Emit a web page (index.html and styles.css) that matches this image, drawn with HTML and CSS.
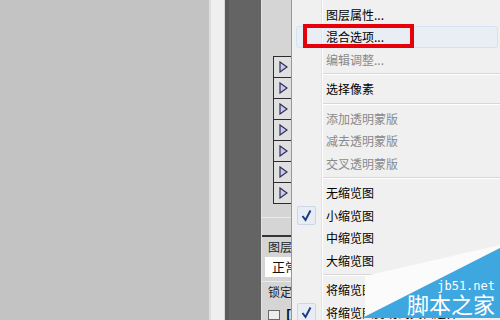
FILE: index.html
```html
<!DOCTYPE html>
<html lang="zh-CN">
<head>
    <meta charset="UTF-8">
    <title>图层菜单</title>
    <link rel="stylesheet" href="styles.css">
</head>
<body>

<div class="app">
    <div class="canvas"></div>
    <div class="ruler"></div>
    <div class="dock"></div>

    <div class="layers">
        <div class="layers-top"></div>
        <div class="expand-list">
            <div class="expand"><svg width="9" height="12" viewBox="0 0 9 12"><polygon points="1,1 8,6 1,11" /></svg></div>
            <div class="expand"><svg width="9" height="12" viewBox="0 0 9 12"><polygon points="1,1 8,6 1,11" /></svg></div>
            <div class="expand"><svg width="9" height="12" viewBox="0 0 9 12"><polygon points="1,1 8,6 1,11" /></svg></div>
            <div class="expand"><svg width="9" height="12" viewBox="0 0 9 12"><polygon points="1,1 8,6 1,11" /></svg></div>
            <div class="expand"><svg width="9" height="12" viewBox="0 0 9 12"><polygon points="1,1 8,6 1,11" /></svg></div>
            <div class="expand"><svg width="9" height="12" viewBox="0 0 9 12"><polygon points="1,1 8,6 1,11" /></svg></div>
            <div class="expand"><svg width="9" height="12" viewBox="0 0 9 12"><polygon points="1,1 8,6 1,11" /></svg></div>
        </div>
        <div class="layers-gap"></div>
        <div class="tab-strip"></div>
        <div class="panel-tab">图层</div>
        <div class="blend-mode">正常</div>
        <div class="lock-row">锁定</div>
        <div class="lock-icons"><span class="lock-box"></span><span class="bracket">[</span></div>
    </div>

    <div class="context-menu">
        <div class="item"><span class="mark"></span><span>图层属性...</span></div>
        <div class="item hover"><span class="mark"></span><span>混合选项...</span></div>
        <div class="item disabled"><span class="mark"></span><span>编辑调整...</span></div>
        <div class="sep"></div>
        <div class="item"><span class="mark"></span><span>选择像素</span></div>
        <div class="sep"></div>
        <div class="item disabled"><span class="mark"></span><span>添加透明蒙版</span></div>
        <div class="item disabled"><span class="mark"></span><span>减去透明蒙版</span></div>
        <div class="item disabled"><span class="mark"></span><span>交叉透明蒙版</span></div>
        <div class="sep"></div>
        <div class="item"><span class="mark"></span><span>无缩览图</span></div>
        <div class="item"><span class="mark checked"><svg width="11" height="13" viewBox="0 0 11 13"><path d="M1.5 7 L4.5 11 L9.5 1.5" /></svg></span><span>小缩览图</span></div>
        <div class="item"><span class="mark"></span><span>中缩览图</span></div>
        <div class="item"><span class="mark"></span><span>大缩览图</span></div>
        <div class="sep"></div>
        <div class="item"><span class="mark"></span><span>将缩览图剪切到图层边界</span></div>
        <div class="item"><span class="mark checked"><svg width="11" height="13" viewBox="0 0 11 13"><path d="M1.5 7 L4.5 11 L9.5 1.5" /></svg></span><span>将缩览图剪切到文档边界</span></div>
    </div>

    <div class="callout"></div>

    <div class="watermark">
        <svg width="140" height="76" viewBox="0 0 140 76">
            <polygon class="wm-light" points="5,32 140,1 140,4 5,74" />
            <polygon class="wm-blue" points="2,74 140,4 140,74" />
        </svg>
        <div class="wm-text">
            <div class="wm-url">jb51.net</div>
            <div class="wm-name">脚本之家</div>
        </div>
    </div>
</div>

</body>
</html>
```

FILE: styles.css
```css
/* page */
body {
    margin: 0;
    font-family: "Noto Sans CJK SC", "Liberation Sans", sans-serif;
    font-size: 12px;
    color: #000;
}

.app {
    position: relative;
    display: flex;
    width: 500px;
    height: 320px;
    overflow: hidden;
    background: #c3c3c3;
}

.canvas {
    width: 209px;
    background-color: #c3c3c3;
}

.ruler {
    width: 16px;
    box-sizing: border-box;
    background-color: #efefef;
    border-left: 2px solid #dedede;
    border-right: 1px solid #d6d6d6;
}

.dock {
    width: 36px;
    box-sizing: border-box;
    background-color: #646464;
    border-left: 4px solid #5a5a5a;
}

/* layers panel, mostly hidden under the menu */
.layers {
    flex: 1;
    display: flex;
    flex-direction: column;
    background-color: #d5d5d5;
    border-left: 1px solid #e2e2e2;
}

.layers-top {
    height: 57px;
}

.expand-list {
    margin-left: 11px;
}

.expand {
    display: flex;
    align-items: center;
    height: 20px;
    padding-left: 5px;
    background-color: #e0e0e0;
    border: 1px solid #2c2c2c;
    border-bottom: none;
}

.expand:last-child {
    border-bottom: 1px solid #2c2c2c;
}

.expand polygon {
    fill: #c9c9ea;
    stroke: #2d2d5a;
    stroke-width: 1.2;
}

.layers-gap {
    height: 13px;
    border-bottom: 1px solid #ececec;
}

.tab-strip {
    height: 17px;
    border-bottom: 2px solid #343434;
}

.panel-tab {
    height: 20px;
    line-height: 20px;
    padding-left: 6px;
    color: #222;
}

.blend-mode {
    height: 20px;
    line-height: 20px;
    margin-left: 3px;
    padding-left: 7px;
    background-color: #fff;
    color: #111;
    font-size: 13px;
}

.lock-row {
    height: 20px;
    line-height: 20px;
    margin-top: 4px;
    padding-left: 6px;
    border-top: 1px solid #ebebeb;
    color: #222;
}

.lock-icons {
    display: flex;
    align-items: flex-start;
    gap: 5px;
    padding: 8px 0 0 6px;
}

.lock-box {
    width: 10px;
    height: 8px;
    border: 1px solid #6a6a6a;
    background-color: #eee;
}

.bracket {
    font-family: "Liberation Mono", monospace;
    font-size: 12px;
    line-height: 10px;
    font-weight: bold;
}

/* context menu */
.context-menu {
    position: absolute;
    left: 291px;
    top: 0;
    width: 209px;
    height: 330px;
    padding-top: 3px;
    border-left: 1px solid #979797;
    background:
        linear-gradient(to right, transparent 29px, #e2e3e3 29px, #e2e3e3 30px, #fff 30px, #fff 31px, transparent 31px),
        #f0f0f0;
}

.item {
    position: relative;
    display: grid;
    grid-template-columns: 30px 1fr;
    column-gap: 4px;
    align-items: center;
    height: 22.5px;
    white-space: nowrap;
}

.item.disabled {
    color: #8a8a8a;
}

.item.hover::before {
    content: '';
    position: absolute;
    left: 4px;
    right: 3px;
    top: 0;
    bottom: 0;
    border: 1px solid #d3e3f4;
    border-radius: 3px;
    background-color: rgba(225, 236, 248, 0.45);
}

.item span {
    position: relative;
}

.mark {
    display: flex;
    justify-content: center;
}

.mark.checked {
    width: 19px;
    height: 19px;
    margin-left: 5px;
    align-items: center;
    box-sizing: border-box;
    border: 1px solid #cbd6e6;
    border-radius: 2px;
    background-color: #e8edf5;
}

.mark.checked path {
    fill: none;
    stroke: #1d3a85;
    stroke-width: 2;
}

.sep {
    display: flex;
    align-items: center;
    height: 7px;
    margin-left: 31px;
}

.sep::after {
    content: '';
    flex: 1;
    border-top: 1px solid #d7d7d7;
    border-bottom: 1px solid #fff;
}

/* red annotation box */
.callout {
    position: absolute;
    left: 303px;
    top: 24px;
    width: 111px;
    height: 24px;
    box-sizing: border-box;
    border: 4px solid #e5000a;
}

/* watermark */
.watermark {
    position: absolute;
    left: 360px;
    top: 244px;
    width: 140px;
    height: 76px;
}

.watermark svg {
    position: absolute;
    left: 0;
    top: 0;
}

.wm-light {
    fill: #fbfbfb;
}

.wm-blue {
    fill: #3fa7df;
}

.wm-text {
    position: absolute;
    right: 5px;
    top: 37px;
    text-align: right;
    color: #fff;
}

.wm-url {
    font-family: "DejaVu Sans Mono", monospace;
    font-size: 12px;
    line-height: 11px;
}

.wm-name {
    font-size: 22px;
    line-height: 23px;
    letter-spacing: 0;
}
```
